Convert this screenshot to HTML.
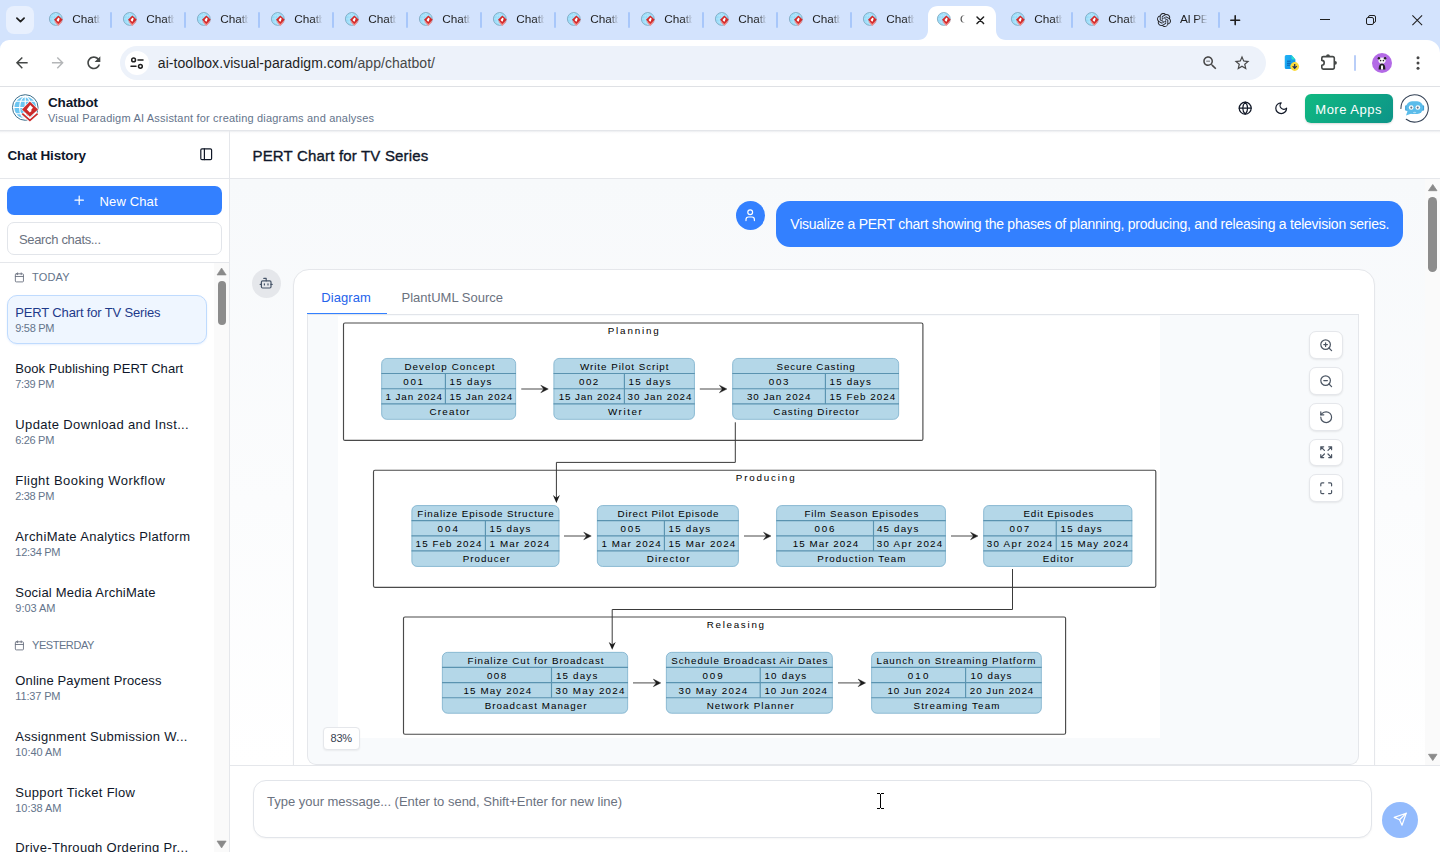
<!DOCTYPE html>
<html><head><meta charset="utf-8"><title>Chatbot</title>
<style>
html,body{margin:0;padding:0}
body{width:1440px;height:852px;overflow:hidden;position:relative;background:#fff;font-family:"Liberation Sans",sans-serif;}
.a{position:absolute;display:block}
.t{position:absolute;white-space:pre;display:block}
svg{overflow:visible}
</style></head><body>
<svg width="0" height="0" style="position:absolute"><defs><symbol id="vp" viewBox="0 0 40 40">
<circle cx="19.25" cy="19.5" r="12.8" fill="#fff" stroke="#3d6e8a" stroke-width="1"/>
<circle cx="19.25" cy="19.5" r="10.8" fill="#6cc5f1"/>
<g stroke="#fff" stroke-width="1.1" fill="none"><path d="M8 19.5h23M10 13.3h19M10 25.7h19M19.25 8v23"/><ellipse cx="19.25" cy="19.5" rx="5.6" ry="10.8"/></g>
<path d="M23.9 12.7 32.6 21.4 23.9 29.4 15.4 21.4Z" fill="#fff"/>
<path d="M23.9 13.4 32 21.4 23.9 28.7 16 21.4Z" fill="#cb2a2a"/>
<path d="M24.2 17 27 19.8 25.4 21.4v1.8l-1.6 1.4 -3-3.2Z" fill="#fff"/>
<path d="M16.3 25.3 23.9 32.4 31.6 25.3" fill="none" stroke="#fff" stroke-width="3.4"/>
<path d="M16.3 25.6 23.9 32.4 31.6 25.6" fill="none" stroke="#cb2a2a" stroke-width="1.7"/>
</symbol><symbol id="vps" viewBox="0 0 40 40">
<circle cx="19.25" cy="19.5" r="12.6" fill="#97dbf9" stroke="#7da6bd" stroke-width="1.6"/>
<g stroke="#fff" stroke-width="1" fill="none" opacity=".45"><path d="M8 19.5h23M10 13.3h19M10 25.7h19M19.25 8v23"/><ellipse cx="19.25" cy="19.5" rx="5.6" ry="10.8"/></g>
<path d="M16 24.5 24.2 33.5 32.5 24.5Z" fill="#f08a8a"/>
<path d="M24.2 12.6 33 21.2 24.2 29.4 15.6 21.2Z" fill="#d42a2a"/>
<path d="M24.4 16.6 27.4 19.6 25.6 21.3v2l-1.8 1.500 -3.200-3.400Z" fill="#fff"/>
</symbol><symbol id="oai" viewBox="0 0 24 24"><path fill="#202124" d="M22.2819 9.8211a5.9847 5.9847 0 0 0-.5157-4.9108 6.0462 6.0462 0 0 0-6.5098-2.9A6.0651 6.0651 0 0 0 4.9807 4.1818a5.9847 5.9847 0 0 0-3.9977 2.9 6.0462 6.0462 0 0 0 .7427 7.0966 5.98 5.98 0 0 0 .511 4.9107 6.051 6.051 0 0 0 6.5146 2.9001A5.9847 5.9847 0 0 0 13.2599 24a6.0557 6.0557 0 0 0 5.7718-4.2058 5.9894 5.9894 0 0 0 3.9977-2.9001 6.0557 6.0557 0 0 0-.7475-7.0729zm-9.022 12.6081a4.4755 4.4755 0 0 1-2.8764-1.0408l.1419-.0804 4.7783-2.7582a.7948.7948 0 0 0 .3927-.6813v-6.7369l2.02 1.1686a.071.071 0 0 1 .038.052v5.5826a4.504 4.504 0 0 1-4.4945 4.4944zm-9.6607-4.1254a4.4708 4.4708 0 0 1-.5346-3.0137l.142.0852 4.783 2.7582a.7712.7712 0 0 0 .7806 0l5.8428-3.3685v2.3324a.0804.0804 0 0 1-.0332.0615L9.74 19.9502a4.4992 4.4992 0 0 1-6.1408-1.6464zM2.3408 7.8956a4.485 4.485 0 0 1 2.3655-1.9728V11.6a.7664.7664 0 0 0 .3879.6765l5.8144 3.3543-2.0201 1.1685a.0757.0757 0 0 1-.071 0l-4.8303-2.7865A4.504 4.504 0 0 1 2.3408 7.872zm16.5963 3.8558L13.1038 8.364 15.1192 7.2a.0757.0757 0 0 1 .071 0l4.8303 2.7913a4.4944 4.4944 0 0 1-.6765 8.1042v-5.6772a.79.79 0 0 0-.407-.667zm2.0107-3.0231l-.142-.0852-4.7735-2.7818a.7759.7759 0 0 0-.7854 0L9.409 9.2297V6.8974a.0662.0662 0 0 1 .0284-.0615l4.8303-2.7866a4.4992 4.4992 0 0 1 6.6802 4.66zM8.3065 12.863l-2.02-1.1638a.0804.0804 0 0 1-.038-.0567V6.0742a4.4992 4.4992 0 0 1 7.3757-3.4537l-.142.0805L8.704 5.459a.7948.7948 0 0 0-.3927.6813zm1.0976-2.3654l2.602-1.4998 2.6069 1.4998v2.9994l-2.5974 1.4997-2.6067-1.4997Z"/></symbol></defs></svg>

<div class="a" style="left:0px;top:0px;width:1440px;height:56px;background:#d3e3fd"></div>
<div class="a" style="left:6px;top:6px;width:28px;height:28px;background:#e8f0fe;border-radius:8px"></div>
<svg class="a" style="left:15.5px;top:16.8px" width="9" height="6" viewBox="0 0 9 6" ><path d="M.9 1.100 4.500 4.700 8.100 1.100" fill="none" stroke="#1f1f1f" stroke-width="1.700" stroke-linecap="round" stroke-linejoin="round"/></svg>
<div class="a" style="left:0px;top:40px;width:1440px;height:46px;background:#fff;border-radius:9px 13px 0 0"></div>
<svg class="a" style="left:918px;top:6px" width="88" height="34" viewBox="0 0 88 34"><path d="M0 34 C6 34 10 30 10 24 V10 C10 4 14 0 20 0 H68 C74 0 78 4 78 10 V24 C78 30 82 34 88 34 Z" fill="#fff"/></svg>
<svg class="a" style="left:45.8px;top:9.2px" width="20.4" height="20.4" viewBox="0 0 40 40" ><use href="#vps"/></svg>
<span class="t" style="left:72.30px;top:14.01px;font-size:11.8px;line-height:11.8px;color:#1f1f1f;width:27.400px;overflow:hidden;letter-spacing:-0.1px;-webkit-mask-image:linear-gradient(90deg,#000 70%,rgba(0,0,0,.12) 97%);">Chatbot</span>
<div class="a" style="left:110px;top:12px;width:2px;height:16px;background:#a8c7fa;border-radius:1px"></div>
<svg class="a" style="left:119.8px;top:9.2px" width="20.4" height="20.4" viewBox="0 0 40 40" ><use href="#vps"/></svg>
<span class="t" style="left:146.30px;top:14.01px;font-size:11.8px;line-height:11.8px;color:#1f1f1f;width:27.400px;overflow:hidden;letter-spacing:-0.1px;-webkit-mask-image:linear-gradient(90deg,#000 70%,rgba(0,0,0,.12) 97%);">Chatbot</span>
<div class="a" style="left:184px;top:12px;width:2px;height:16px;background:#a8c7fa;border-radius:1px"></div>
<svg class="a" style="left:193.8px;top:9.2px" width="20.4" height="20.4" viewBox="0 0 40 40" ><use href="#vps"/></svg>
<span class="t" style="left:220.30px;top:14.01px;font-size:11.8px;line-height:11.8px;color:#1f1f1f;width:27.400px;overflow:hidden;letter-spacing:-0.1px;-webkit-mask-image:linear-gradient(90deg,#000 70%,rgba(0,0,0,.12) 97%);">Chatbot</span>
<div class="a" style="left:258px;top:12px;width:2px;height:16px;background:#a8c7fa;border-radius:1px"></div>
<svg class="a" style="left:267.8px;top:9.2px" width="20.4" height="20.4" viewBox="0 0 40 40" ><use href="#vps"/></svg>
<span class="t" style="left:294.30px;top:14.01px;font-size:11.8px;line-height:11.8px;color:#1f1f1f;width:27.400px;overflow:hidden;letter-spacing:-0.1px;-webkit-mask-image:linear-gradient(90deg,#000 70%,rgba(0,0,0,.12) 97%);">Chatbot</span>
<div class="a" style="left:332px;top:12px;width:2px;height:16px;background:#a8c7fa;border-radius:1px"></div>
<svg class="a" style="left:341.8px;top:9.2px" width="20.4" height="20.4" viewBox="0 0 40 40" ><use href="#vps"/></svg>
<span class="t" style="left:368.30px;top:14.01px;font-size:11.8px;line-height:11.8px;color:#1f1f1f;width:27.400px;overflow:hidden;letter-spacing:-0.1px;-webkit-mask-image:linear-gradient(90deg,#000 70%,rgba(0,0,0,.12) 97%);">Chatbot</span>
<div class="a" style="left:406px;top:12px;width:2px;height:16px;background:#a8c7fa;border-radius:1px"></div>
<svg class="a" style="left:415.8px;top:9.2px" width="20.4" height="20.4" viewBox="0 0 40 40" ><use href="#vps"/></svg>
<span class="t" style="left:442.30px;top:14.01px;font-size:11.8px;line-height:11.8px;color:#1f1f1f;width:27.400px;overflow:hidden;letter-spacing:-0.1px;-webkit-mask-image:linear-gradient(90deg,#000 70%,rgba(0,0,0,.12) 97%);">Chatbot</span>
<div class="a" style="left:480px;top:12px;width:2px;height:16px;background:#a8c7fa;border-radius:1px"></div>
<svg class="a" style="left:489.8px;top:9.2px" width="20.4" height="20.4" viewBox="0 0 40 40" ><use href="#vps"/></svg>
<span class="t" style="left:516.30px;top:14.01px;font-size:11.8px;line-height:11.8px;color:#1f1f1f;width:27.400px;overflow:hidden;letter-spacing:-0.1px;-webkit-mask-image:linear-gradient(90deg,#000 70%,rgba(0,0,0,.12) 97%);">Chatbot</span>
<div class="a" style="left:554px;top:12px;width:2px;height:16px;background:#a8c7fa;border-radius:1px"></div>
<svg class="a" style="left:563.8px;top:9.2px" width="20.4" height="20.4" viewBox="0 0 40 40" ><use href="#vps"/></svg>
<span class="t" style="left:590.30px;top:14.01px;font-size:11.8px;line-height:11.8px;color:#1f1f1f;width:27.400px;overflow:hidden;letter-spacing:-0.1px;-webkit-mask-image:linear-gradient(90deg,#000 70%,rgba(0,0,0,.12) 97%);">Chatbot</span>
<div class="a" style="left:628px;top:12px;width:2px;height:16px;background:#a8c7fa;border-radius:1px"></div>
<svg class="a" style="left:637.8px;top:9.2px" width="20.4" height="20.4" viewBox="0 0 40 40" ><use href="#vps"/></svg>
<span class="t" style="left:664.30px;top:14.01px;font-size:11.8px;line-height:11.8px;color:#1f1f1f;width:27.400px;overflow:hidden;letter-spacing:-0.1px;-webkit-mask-image:linear-gradient(90deg,#000 70%,rgba(0,0,0,.12) 97%);">Chatbot</span>
<div class="a" style="left:702px;top:12px;width:2px;height:16px;background:#a8c7fa;border-radius:1px"></div>
<svg class="a" style="left:711.8px;top:9.2px" width="20.4" height="20.4" viewBox="0 0 40 40" ><use href="#vps"/></svg>
<span class="t" style="left:738.30px;top:14.01px;font-size:11.8px;line-height:11.8px;color:#1f1f1f;width:27.400px;overflow:hidden;letter-spacing:-0.1px;-webkit-mask-image:linear-gradient(90deg,#000 70%,rgba(0,0,0,.12) 97%);">Chatbot</span>
<div class="a" style="left:776px;top:12px;width:2px;height:16px;background:#a8c7fa;border-radius:1px"></div>
<svg class="a" style="left:785.8px;top:9.2px" width="20.4" height="20.4" viewBox="0 0 40 40" ><use href="#vps"/></svg>
<span class="t" style="left:812.30px;top:14.01px;font-size:11.8px;line-height:11.8px;color:#1f1f1f;width:27.400px;overflow:hidden;letter-spacing:-0.1px;-webkit-mask-image:linear-gradient(90deg,#000 70%,rgba(0,0,0,.12) 97%);">Chatbot</span>
<div class="a" style="left:850px;top:12px;width:2px;height:16px;background:#a8c7fa;border-radius:1px"></div>
<svg class="a" style="left:859.8px;top:9.2px" width="20.4" height="20.4" viewBox="0 0 40 40" ><use href="#vps"/></svg>
<span class="t" style="left:886.30px;top:14.01px;font-size:11.8px;line-height:11.8px;color:#1f1f1f;width:27.400px;overflow:hidden;letter-spacing:-0.1px;-webkit-mask-image:linear-gradient(90deg,#000 70%,rgba(0,0,0,.12) 97%);">Chatbot</span>
<svg class="a" style="left:933.8px;top:9.2px" width="20.4" height="20.4" viewBox="0 0 40 40" ><use href="#vps"/></svg>
<span class="t" style="left:960.00px;top:14.01px;font-size:11.8px;line-height:11.8px;color:#1f1f1f;width:4.5px;overflow:hidden;-webkit-mask-image:linear-gradient(90deg,#000 10%,transparent 100%);">C</span>
<svg class="a" style="left:975.5px;top:15.8px" width="8.6" height="8.6" viewBox="0 0 8.600 8.600" ><path d="M1 1l6.600 6.600M7.600 1l-6.600 6.600" stroke="#1f1f1f" stroke-width="1.500" stroke-linecap="round"/></svg>
<svg class="a" style="left:1007.8px;top:9.2px" width="20.4" height="20.4" viewBox="0 0 40 40" ><use href="#vps"/></svg>
<span class="t" style="left:1034.30px;top:14.01px;font-size:11.8px;line-height:11.8px;color:#1f1f1f;width:27.400px;overflow:hidden;letter-spacing:-0.1px;-webkit-mask-image:linear-gradient(90deg,#000 70%,rgba(0,0,0,.12) 97%);">Chatbot</span>
<div class="a" style="left:1071px;top:12px;width:2px;height:16px;background:#a8c7fa;border-radius:1px"></div>
<svg class="a" style="left:1081.8px;top:9.2px" width="20.4" height="20.4" viewBox="0 0 40 40" ><use href="#vps"/></svg>
<span class="t" style="left:1108.30px;top:14.01px;font-size:11.8px;line-height:11.8px;color:#1f1f1f;width:27.400px;overflow:hidden;letter-spacing:-0.1px;-webkit-mask-image:linear-gradient(90deg,#000 70%,rgba(0,0,0,.12) 97%);">Chatbot</span>
<div class="a" style="left:1144px;top:12px;width:2px;height:16px;background:#a8c7fa;border-radius:1px"></div>
<svg class="a" style="left:1157px;top:13px" width="14" height="14" viewBox="0 0 24 24" ><use href="#oai"/></svg>
<span class="t" style="left:1180.00px;top:14.01px;font-size:11.8px;line-height:11.8px;color:#1f1f1f;width:27px;overflow:hidden;letter-spacing:-0.4px;-webkit-mask-image:linear-gradient(90deg,#000 60%,rgba(0,0,0,.1) 98%);">AI PERT</span>
<div class="a" style="left:1218px;top:12px;width:2px;height:16px;background:#a8c7fa;border-radius:1px"></div>
<svg class="a" style="left:1229.8px;top:14.8px" width="10.4" height="10.4" viewBox="0 0 10.400 10.400" ><path d="M5.200 .8v8.800M.8 5.200h8.800" stroke="#1f1f1f" stroke-width="1.600" stroke-linecap="round"/></svg>
<div class="a" style="left:1320px;top:19px;width:10px;height:1px;background:#1f1f1f"></div>
<svg class="a" style="left:1366px;top:15px" width="10" height="10" viewBox="0 0 10 10" ><rect x="0.5" y="2.5" width="7" height="7" rx="1.5" fill="none" stroke="#1f1f1f" stroke-width="1"/><path d="M2.5 2.5V2a1.5 1.5 0 0 1 1.5-1.5h4A1.5 1.5 0 0 1 9.5 2v4A1.5 1.5 0 0 1 8 7.5h-.5" fill="none" stroke="#1f1f1f" stroke-width="1"/></svg>
<svg class="a" style="left:1412px;top:15px" width="10.5" height="10.5" viewBox="0 0 10.5 10.5" ><path d="M.4 .4l9.7 9.7M10.1 .4L.4 10.1" stroke="#1f1f1f" stroke-width="1.05"/></svg>
<svg class="a" style="left:13.4px;top:54.2px" width="17.6" height="17.6" viewBox="0 0 24 24" ><path d="M20 11H7.83l5.59-5.59L12 4l-8 8 8 8 1.41-1.41L7.83 13H20v-2z" fill="#444746"/></svg>
<svg class="a" style="left:49px;top:54.2px" width="17.6" height="17.6" viewBox="0 0 24 24" ><path d="M12 4l-1.41 1.41L16.17 11H4v2h12.17l-5.58 5.59L12 20l8-8z" fill="#b4b6b8"/></svg>
<svg class="a" style="left:84.3px;top:53.2px" width="19.6" height="19.6" viewBox="0 0 24 24" ><path d="M17.65 6.35C16.2 4.9 14.21 4 12 4c-4.42 0-7.99 3.58-7.99 8s3.57 8 7.99 8c3.73 0 6.84-2.55 7.73-6h-2.08c-.82 2.33-3.04 4-5.65 4-3.31 0-6-2.69-6-6s2.69-6 6-6c1.66 0 3.14.69 4.22 1.78L13 11h7V4l-2.35 2.35z" fill="#444746"/></svg>
<div class="a" style="left:120px;top:46px;width:1146px;height:34px;background:#edf2fa;border-radius:17px"></div>
<div class="a" style="left:125px;top:51px;width:24px;height:24px;background:#fff;border-radius:12px"></div>
<svg class="a" style="left:130px;top:56px" width="14" height="14" viewBox="0 0 14 14" ><g fill="none" stroke="#1f1f1f" stroke-width="1.5" stroke-linecap="round"><circle cx="3.6" cy="3.9" r="1.9"/><path d="M8 3.9h5"/><circle cx="10.4" cy="10.3" r="1.9"/><path d="M1 10.3h5"/></g></svg>
<span class="t" style="left:157.80px;top:55.85px;font-size:14px;line-height:14px;color:#1f1f1f;letter-spacing:0.067px;">ai-toolbox.visual-paradigm.com</span>
<span class="t" style="left:353.60px;top:55.85px;font-size:14px;line-height:14px;color:#474747;letter-spacing:0.037px;">/app/chatbot/</span>
<svg class="a" style="left:1201px;top:54px" width="18" height="18" viewBox="0 0 24 24" ><path d="M15.5 14h-.79l-.28-.27C15.41 12.59 16 11.11 16 9.5 16 5.91 13.09 3 9.5 3S3 5.91 3 9.5 5.91 16 9.5 16c1.61 0 3.09-.59 4.23-1.57l.27.28v.79l5 4.99L20.49 19l-4.99-5zm-6 0C7.01 14 5 11.99 5 9.5S7.01 5 9.5 5 14 7.01 14 9.5 11.99 14 9.5 14zM7 9h5v1H7z" fill="#474747"/></svg>
<svg class="a" style="left:1233px;top:54px" width="18" height="18" viewBox="0 0 24 24" ><path d="M22 9.24l-7.19-.62L12 2 9.19 8.63 2 9.24l5.46 4.73L5.82 21 12 17.27 18.18 21l-1.63-7.03L22 9.24zM12 15.4l-3.76 2.27 1-4.28-3.32-2.88 4.38-.38L12 6.1l1.71 4.04 4.38.38-3.32 2.88 1 4.28L12 15.4z" fill="#474747"/></svg>
<svg class="a" style="left:1284px;top:54px" width="16" height="18" viewBox="0 0 16 18" ><defs><linearGradient id="dg" x1="0" y1="0" x2="1" y2="1"><stop offset="0" stop-color="#22b4f6"/><stop offset="1" stop-color="#0c8ee6"/></linearGradient></defs><path d="M.75 2.500A1.500 1.500 0 0 1 2.250 1H7.500l3.900 4.400V13.400a1.500 1.500 0 0 1-1.500 1.500H2.250a1.500 1.500 0 0 1-1.500-1.500Z" fill="url(#dg)"/><path d="M7.500 1l3.900 4.400H8.500a1 1 0 0 1-1-1Z" fill="#2fe0cb"/><path d="M3 7.200h3.600M3 9.300h3.600M3 11.200h3" stroke="#0a5fb0" stroke-width="1"/><circle cx="10.700" cy="12.500" r="4.400" fill="#fbdb3c"/><path d="M10.700 9.900v4M8.700 12.200l2 2.200 2-2.200" stroke="#1a2a5a" stroke-width="1.200" fill="none"/></svg>
<svg class="a" style="left:1320px;top:53px" width="18" height="18" viewBox="0 0 18 18" ><path d="M3.300 3.600H12.800a1.500 1.500 0 0 1 1.500 1.500V14.600a1.500 1.500 0 0 1-1.500 1.500H3.300a1.500 1.500 0 0 1-1.500-1.500V12.200a2.400 2.400 0 0 0 0-4.800V5.100a1.500 1.500 0 0 1 1.500-1.500Z" fill="none" stroke="#444746" stroke-width="1.600" stroke-linejoin="round"/><path d="M6.100 3.100a1.900 1.900 0 0 1 3.800 0ZM15 7.900a1.900 1.900 0 0 1 0 3.800Z" fill="#444746"/></svg>
<div class="a" style="left:1354px;top:55px;width:1.5px;height:16px;background:#b9cef8;border-radius:1px"></div>
<svg class="a" style="left:1372px;top:53px" width="20" height="20" viewBox="0 0 20 20" ><circle cx="10" cy="10" r="10" fill="#b36ae6"/><ellipse cx="10" cy="7.6" rx="3.6" ry="3.1" fill="#f4f4f4"/><circle cx="6.9" cy="5.2" r="1.2" fill="#222"/><circle cx="13.1" cy="5.2" r="1.2" fill="#222"/><circle cx="8.6" cy="7.6" r=".8" fill="#222"/><circle cx="11.4" cy="7.6" r=".8" fill="#222"/><path d="M6.6 16.5c0-4 1.2-6 3.4-6s3.400 2 3.400 6Z" fill="#222"/><rect x="9" y="12.500" width="2" height="4" fill="#f4f4f4"/></svg>
<svg class="a" style="left:1416px;top:56px" width="4" height="14" viewBox="0 0 4 14" ><circle cx="2" cy="1.8" r="1.5" fill="#474747"/><circle cx="2" cy="7" r="1.5" fill="#474747"/><circle cx="2" cy="12.2" r="1.5" fill="#474747"/></svg>
<div class="a" style="left:0px;top:86px;width:1440px;height:1px;background:#dfe1e5"></div>
<div class="a" style="left:0px;top:87px;width:1440px;height:43px;background:#fff"></div>
<div class="a" style="left:0px;top:129.7px;width:1440px;height:1.3px;background:#e4e6ea"></div>
<svg class="a" style="left:6px;top:88px" width="40" height="40" viewBox="0 0 40 40" ><use href="#vp"/></svg>
<span class="t" style="left:48.00px;top:95.97px;font-size:13.5px;line-height:13.5px;color:#0f172a;letter-spacing:-0.165px;font-weight:bold;">Chatbot</span>
<span class="t" style="left:48.00px;top:112.89px;font-size:11px;line-height:11px;color:#64748b;letter-spacing:0.192px;">Visual Paradigm AI Assistant for creating diagrams and analyses</span>
<svg class="a" style="left:1237.9px;top:100.8px" width="14.4" height="14.4" viewBox="0 0 24 24" fill="none" stroke="#111827" stroke-width="2" stroke-linecap="round" stroke-linejoin="round"><circle cx="12" cy="12" r="10"/><path d="M12 2a14.500 14.500 0 0 0 0 20 14.500 14.500 0 0 0 0-20"/><path d="M2 12h20"/></svg>
<svg class="a" style="left:1273.8px;top:100.8px" width="14.4" height="14.4" viewBox="0 0 24 24" fill="none" stroke="#111827" stroke-width="2" stroke-linecap="round" stroke-linejoin="round"><path d="M12 3a6 6 0 0 0 9 9 9 9 0 1 1-9-9Z"/></svg>
<div class="a" style="left:1305px;top:94px;width:88px;height:29px;background:linear-gradient(135deg,#10b981,#0d9488);border-radius:6px;box-shadow:0 1px 2px rgba(0,0,0,.15)"></div>
<span class="t" style="left:1315.30px;top:102.80px;font-size:13px;line-height:13px;color:#fff;letter-spacing:0.507px;">More Apps</span>
<svg class="a" style="left:1400px;top:94px" width="29" height="29" viewBox="0 0 29 29" ><path d="M.9 14.400A13.700 13.700 0 1 1 6.240 25.250" fill="none" stroke="#334155" stroke-width="1.050" stroke-linecap="round"/><rect x="5.100" y="11.300" width="2.400" height="5.400" rx="1.200" fill="#3f9fd6"/><rect x="21.700" y="11.300" width="2.400" height="5.400" rx="1.200" fill="#3f9fd6"/><path d="M7.400 17.500 6 21.400 11.500 19.600Z" fill="#5bbcea"/><rect x="6.200" y="7.200" width="16.800" height="12.800" rx="5.800" fill="#5bbcea"/><circle cx="11.200" cy="13.500" r="2.350" fill="#fff"/><circle cx="17.800" cy="13.500" r="2.350" fill="#fff"/><circle cx="11.300" cy="13.600" r="1.050" fill="#5f7082"/><circle cx="17.700" cy="13.600" r="1.050" fill="#5f7082"/><ellipse cx="14.600" cy="18.500" rx="1.700" ry=".7" fill="#a9def6"/></svg>
<div class="a" style="left:0px;top:131px;width:229px;height:721px;background:#fff"></div>
<div class="a" style="left:229px;top:131px;width:1px;height:721px;background:#e5e7eb"></div>
<span class="t" style="left:7.50px;top:149.07px;font-size:13.5px;line-height:13.5px;color:#0f172a;letter-spacing:-0.160px;font-weight:bold;">Chat History</span>
<svg class="a" style="left:198.9px;top:146.8px" width="14.4" height="14.4" viewBox="0 0 24 24" fill="none" stroke="#111827" stroke-width="2" stroke-linecap="round" stroke-linejoin="round"><rect width="18" height="18" x="3" y="3" rx="2"/><path d="M9 3v18"/></svg>
<div class="a" style="left:0px;top:178px;width:229px;height:1px;background:#e5e7eb"></div>
<div class="a" style="left:7px;top:186px;width:215px;height:29px;background:#3380ff;border-radius:7px"></div>
<svg class="a" style="left:72.2px;top:193.3px" width="14.4" height="14.4" viewBox="0 0 24 24" fill="none" stroke="#fff" stroke-width="2" stroke-linecap="round" stroke-linejoin="round"><path d="M5 12h14"/><path d="M12 5v14"/></svg>
<span class="t" style="left:99.50px;top:195.00px;font-size:13px;line-height:13px;color:#fff;letter-spacing:0.132px;">New Chat</span>
<div class="a" style="left:7px;top:222px;width:215px;height:32.5px;background:#fff;border:1px solid #e2e5ea;border-radius:7px;box-sizing:border-box"></div>
<span class="t" style="left:19.00px;top:233.00px;font-size:13px;line-height:13px;color:#6b7280;letter-spacing:-0.336px;">Search chats...</span>
<div class="a" style="left:0px;top:262px;width:229px;height:1px;background:#e5e7eb"></div>
<div class="a" style="left:214px;top:263px;width:15px;height:589px;background:#fafafa"></div>
<svg class="a" style="left:217.2px;top:268px" width="9.2" height="7" viewBox="0 0 9.200 7" ><path d="M0 7 4.600 0 9.200 7Z" fill="#8a8a8a" stroke="#8a8a8a" stroke-width=".6" stroke-linejoin="round"/></svg>
<div class="a" style="left:217.5px;top:281px;width:8.5px;height:44px;background:#8c8c8c;border-radius:4.500px"></div>
<svg class="a" style="left:217.2px;top:840.5px" width="9.2" height="7" viewBox="0 0 9.200 7" ><path d="M0 0 4.600 7 9.200 0Z" fill="#8a8a8a" stroke="#8a8a8a" stroke-width=".6" stroke-linejoin="round"/></svg>
<svg class="a" style="left:14.1px;top:271.9px" width="10.8" height="10.8" viewBox="0 0 24 24" fill="none" stroke="#6b7280" stroke-width="2" stroke-linecap="round" stroke-linejoin="round"><path d="M8 2v4"/><path d="M16 2v4"/><rect width="18" height="18" x="3" y="4" rx="2"/><path d="M3 10h18"/></svg>
<span class="t" style="left:32.00px;top:271.69px;font-size:11px;line-height:11px;color:#64748b;letter-spacing:0.155px;">TODAY</span>
<div class="a" style="left:7px;top:295px;width:200px;height:49px;background:#eff6ff;border:1px solid #bfdbfe;border-radius:10px;box-sizing:border-box;box-shadow:0 1px 2px rgba(59,130,246,.12)"></div>
<span class="t" style="left:15.30px;top:306.00px;font-size:13px;line-height:13px;color:#1e3a8a;letter-spacing:-0.154px;">PERT Chart for TV Series</span>
<span class="t" style="left:15.30px;top:323.09px;font-size:11px;line-height:11px;color:#64748b;letter-spacing:-0.311px;">9:58 PM</span>
<span class="t" style="left:15.30px;top:361.80px;font-size:13px;line-height:13px;color:#0f172a;letter-spacing:0.058px;">Book Publishing PERT Chart</span>
<span class="t" style="left:15.30px;top:378.69px;font-size:11px;line-height:11px;color:#64748b;letter-spacing:-0.328px;">7:39 PM</span>
<span class="t" style="left:15.30px;top:417.80px;font-size:13px;line-height:13px;color:#0f172a;letter-spacing:0.360px;">Update Download and Inst...</span>
<span class="t" style="left:15.30px;top:434.69px;font-size:11px;line-height:11px;color:#64748b;letter-spacing:-0.328px;">6:26 PM</span>
<span class="t" style="left:15.30px;top:473.80px;font-size:13px;line-height:13px;color:#0f172a;letter-spacing:0.468px;">Flight Booking Workflow</span>
<span class="t" style="left:15.30px;top:490.69px;font-size:11px;line-height:11px;color:#64748b;letter-spacing:-0.328px;">2:38 PM</span>
<span class="t" style="left:15.30px;top:530.00px;font-size:13px;line-height:13px;color:#0f172a;letter-spacing:0.343px;">ArchiMate Analytics Platform</span>
<span class="t" style="left:15.30px;top:547.29px;font-size:11px;line-height:11px;color:#64748b;letter-spacing:-0.269px;">12:34 PM</span>
<span class="t" style="left:15.30px;top:586.00px;font-size:13px;line-height:13px;color:#0f172a;letter-spacing:0.207px;">Social Media ArchiMate</span>
<span class="t" style="left:15.30px;top:603.09px;font-size:11px;line-height:11px;color:#64748b;letter-spacing:-0.027px;">9:03 AM</span>
<span class="t" style="left:15.30px;top:673.80px;font-size:13px;line-height:13px;color:#0f172a;letter-spacing:0.149px;">Online Payment Process</span>
<span class="t" style="left:15.30px;top:691.09px;font-size:11px;line-height:11px;color:#64748b;letter-spacing:-0.153px;">11:37 PM</span>
<span class="t" style="left:15.30px;top:729.80px;font-size:13px;line-height:13px;color:#0f172a;letter-spacing:0.295px;">Assignment Submission W...</span>
<span class="t" style="left:15.30px;top:747.09px;font-size:11px;line-height:11px;color:#64748b;letter-spacing:-0.040px;">10:40 AM</span>
<span class="t" style="left:15.30px;top:785.80px;font-size:13px;line-height:13px;color:#0f172a;letter-spacing:0.308px;">Support Ticket Flow</span>
<span class="t" style="left:15.30px;top:802.89px;font-size:11px;line-height:11px;color:#64748b;letter-spacing:-0.040px;">10:38 AM</span>
<span class="t" style="left:15.30px;top:841.00px;font-size:13px;line-height:13px;color:#0f172a;letter-spacing:0.322px;">Drive-Through Ordering Pr...</span>
<svg class="a" style="left:14.1px;top:640.4px" width="10.8" height="10.8" viewBox="0 0 24 24" fill="none" stroke="#6b7280" stroke-width="2" stroke-linecap="round" stroke-linejoin="round"><path d="M8 2v4"/><path d="M16 2v4"/><rect width="18" height="18" x="3" y="4" rx="2"/><path d="M3 10h18"/></svg>
<span class="t" style="left:32.00px;top:640.19px;font-size:11px;line-height:11px;color:#64748b;letter-spacing:-0.439px;">YESTERDAY</span>
<div class="a" style="left:230px;top:131px;width:1210px;height:47px;background:#fff"></div>
<span class="t" style="left:252.50px;top:147.80px;font-size:15px;line-height:15px;color:#0f172a;letter-spacing:0.177px;-webkit-text-stroke:0.35px #0f172a;">PERT Chart for TV Series</span>
<div class="a" style="left:230px;top:178px;width:1210px;height:1px;background:#e5e7eb"></div>
<div class="a" style="left:230px;top:179px;width:1210px;height:586px;background:linear-gradient(180deg,#f7f9fb 0%,#fbfcfd 55%,#ffffff 100%)"></div>
<div class="a" style="left:1425px;top:179px;width:15px;height:586px;background:#fafafa"></div>
<svg class="a" style="left:1427.5px;top:184px" width="9.5" height="7" viewBox="0 0 9.500 7" ><path d="M.5 6.700 4.750 .5 9 6.700Z" fill="#8a8a8a" stroke="#8a8a8a" stroke-width=".8" stroke-linejoin="round"/></svg>
<div class="a" style="left:1428px;top:197px;width:9px;height:75px;background:#8c8c8c;border-radius:4.500px"></div>
<svg class="a" style="left:1427.5px;top:754px" width="9.5" height="7" viewBox="0 0 9.500 7" ><path d="M.5 .3 4.750 6.500 9 .3Z" fill="#8a8a8a" stroke="#8a8a8a" stroke-width=".8" stroke-linejoin="round"/></svg>
<div class="a" style="left:736px;top:200.5px;width:29px;height:29px;background:#3380ff;border-radius:50%"></div>
<svg class="a" style="left:743.3px;top:207.7px" width="14.4" height="14.4" viewBox="0 0 24 24" fill="none" stroke="#fff" stroke-width="2" stroke-linecap="round" stroke-linejoin="round"><path d="M19 21v-2a4 4 0 0 0-4-4H9a4 4 0 0 0-4 4v2"/><circle cx="12" cy="7" r="4"/></svg>
<div class="a" style="left:776px;top:200.7px;width:627.3px;height:46.1px;background:#3380ff;border-radius:14px"></div>
<span class="t" style="left:790.30px;top:217.15px;font-size:14px;line-height:14px;color:#fff;letter-spacing:-0.246px;">Visualize a PERT chart showing the phases of planning, producing, and releasing a television series.</span>
<div class="a" style="left:252px;top:269px;width:29px;height:29px;background:#e5e7eb;border-radius:50%"></div>
<svg class="a" style="left:258.9px;top:276.1px" width="14.4" height="14.4" viewBox="0 0 24 24" fill="none" stroke="#475569" stroke-width="2" stroke-linecap="round" stroke-linejoin="round"><path d="M12 8V4H8"/><rect width="16" height="12" x="4" y="8" rx="2"/><path d="M2 14h2"/><path d="M20 14h2"/><path d="M15 13v2"/><path d="M9 13v2"/></svg>
<div class="a" style="left:230px;top:179px;width:1195px;height:586px;overflow:hidden">
<div class="a" style="left:62.5px;top:90px;width:1082.5px;height:520px;background:#fff;border:1px solid #e5e7eb;border-radius:16px;box-sizing:border-box;box-shadow:0 1px 2px rgba(0,0,0,.04)"></div>
</div>
<span class="t" style="left:321.30px;top:291.30px;font-size:13px;line-height:13px;color:#2563eb;letter-spacing:0.062px;">Diagram</span>
<span class="t" style="left:401.50px;top:291.30px;font-size:13px;line-height:13px;color:#6b7280;letter-spacing:0.007px;">PlantUML Source</span>
<div class="a" style="left:307px;top:314.2px;width:1052px;height:1.4px;background:#e2e5ea"></div>
<div class="a" style="left:307px;top:312.8px;width:80px;height:1.4px;background:#3380ff"></div>
<div class="a" style="left:307px;top:315px;width:1052px;height:450px;background:#f8fafc;border:1px solid #e5e7eb;border-top:none;border-radius:0 0 9px 9px;box-sizing:border-box"></div>
<div class="a" style="left:338px;top:316px;width:822px;height:422px;background:#fff"></div>
<div class="a" style="left:1309.2px;top:331.2px;width:34.3px;height:27.8px;background:#fff;border:1px solid #e5e7eb;border-radius:7px;box-sizing:border-box;box-shadow:0 1px 2px rgba(0,0,0,.08)"></div>
<svg class="a" style="left:1319.1px;top:338.0px" width="14.4" height="14.4" viewBox="0 0 24 24" fill="none" stroke="#4b5563" stroke-width="2" stroke-linecap="round" stroke-linejoin="round"><circle cx="11" cy="11" r="8"/><line x1="21" x2="16.650" y1="21" y2="16.650"/><line x1="8" x2="14" y1="11" y2="11"/><line x1="11" x2="11" y1="8" y2="14"/></svg>
<div class="a" style="left:1309.2px;top:367.0px;width:34.3px;height:27.8px;background:#fff;border:1px solid #e5e7eb;border-radius:7px;box-sizing:border-box;box-shadow:0 1px 2px rgba(0,0,0,.08)"></div>
<svg class="a" style="left:1319.1px;top:373.8px" width="14.4" height="14.4" viewBox="0 0 24 24" fill="none" stroke="#4b5563" stroke-width="2" stroke-linecap="round" stroke-linejoin="round"><circle cx="11" cy="11" r="8"/><line x1="21" x2="16.650" y1="21" y2="16.650"/><line x1="8" x2="14" y1="11" y2="11"/></svg>
<div class="a" style="left:1309.2px;top:402.8px;width:34.3px;height:27.8px;background:#fff;border:1px solid #e5e7eb;border-radius:7px;box-sizing:border-box;box-shadow:0 1px 2px rgba(0,0,0,.08)"></div>
<svg class="a" style="left:1319.1px;top:409.6px" width="14.4" height="14.4" viewBox="0 0 24 24" fill="none" stroke="#4b5563" stroke-width="2" stroke-linecap="round" stroke-linejoin="round"><path d="M3 12a9 9 0 1 0 9-9 9.750 9.750 0 0 0-6.740 2.740L3 8"/><path d="M3 3v5h5"/></svg>
<div class="a" style="left:1309.2px;top:438.6px;width:34.3px;height:27.8px;background:#fff;border:1px solid #e5e7eb;border-radius:7px;box-sizing:border-box;box-shadow:0 1px 2px rgba(0,0,0,.08)"></div>
<svg class="a" style="left:1319.1px;top:445.4px" width="14.4" height="14.4" viewBox="0 0 24 24" fill="none" stroke="#4b5563" stroke-width="2" stroke-linecap="round" stroke-linejoin="round"><path d="m21 21-6-6m6 6v-4.800m0 4.800h-4.800"/><path d="M3 16.200V21m0 0h4.800M3 21l6-6"/><path d="M21 7.800V3m0 0h-4.800M21 3l-6 6"/><path d="M3 7.800V3m0 0h4.800M3 3l6 6"/></svg>
<div class="a" style="left:1309.2px;top:474.4px;width:34.3px;height:27.8px;background:#fff;border:1px solid #e5e7eb;border-radius:7px;box-sizing:border-box;box-shadow:0 1px 2px rgba(0,0,0,.08)"></div>
<svg class="a" style="left:1319.1px;top:481.2px" width="14.4" height="14.4" viewBox="0 0 24 24" fill="none" stroke="#4b5563" stroke-width="2" stroke-linecap="round" stroke-linejoin="round"><path d="M8 3H5a2 2 0 0 0-2 2v3"/><path d="M21 8V5a2 2 0 0 0-2-2h-3"/><path d="M3 16v3a2 2 0 0 0 2 2h3"/><path d="M16 21h3a2 2 0 0 0 2-2v-3"/></svg>
<div class="a" style="left:322.5px;top:726.5px;width:37px;height:23px;background:#fff;border:1px solid #e5e7eb;border-radius:4px;box-sizing:border-box;box-shadow:0 1px 2px rgba(0,0,0,.06)"></div>
<span class="t" style="left:330.60px;top:732.69px;font-size:11px;line-height:11px;color:#374151;letter-spacing:-0.308px;">83%</span>
<div class="a" style="left:230px;top:765px;width:1210px;height:1px;background:#e5e7eb"></div>
<div class="a" style="left:230px;top:766px;width:1210px;height:86px;background:#fff"></div>
<div class="a" style="left:252.5px;top:780px;width:1119.5px;height:57.5px;background:#fff;border:1px solid #e2e5ea;border-radius:13px;box-sizing:border-box;box-shadow:0 1px 2px rgba(0,0,0,.04)"></div>
<span class="t" style="left:267.00px;top:795.00px;font-size:13px;line-height:13px;color:#6b7280;letter-spacing:-0.014px;">Type your message... (Enter to send, Shift+Enter for new line)</span>
<div class="a" style="left:1382px;top:802px;width:36px;height:36px;background:#93bbfd;border-radius:50%"></div>
<svg class="a" style="left:1393.0px;top:812.2px" width="14.4" height="14.4" viewBox="0 0 24 24" fill="none" stroke="#fff" stroke-width="2" stroke-linecap="round" stroke-linejoin="round"><path d="m22 2-7 20-4-9-9-4Z"/><path d="M22 2 11 13"/></svg>
<svg class="a" style="left:877px;top:793px" width="7" height="16" viewBox="0 0 7 16" shape-rendering="crispEdges"><path d="M0 .5h3M4 .5h3M0 15.5h3M4 15.5h3M3.500 1v14" fill="none" stroke="#000" stroke-width="1"/></svg>
<svg class="a" style="left:0;top:0" width="1440" height="852" viewBox="0 0 1440 852" font-family="Liberation Sans, sans-serif" fill="#000">
<rect x="343.5" y="323" width="579.40" height="117.40" rx="1.5" fill="none" stroke="#4a4a4a" stroke-width="1.15"/>
<text x="607.70" y="333.75" textLength="51.05" lengthAdjust="spacing" font-size="9.8">Planning</text>
<rect x="373.5" y="470.2" width="782.30" height="117.10" rx="1.5" fill="none" stroke="#4a4a4a" stroke-width="1.15"/>
<text x="735.80" y="480.60" textLength="58.80" lengthAdjust="spacing" font-size="9.8">Producing</text>
<rect x="403.5" y="617" width="662.10" height="117.20" rx="1.5" fill="none" stroke="#4a4a4a" stroke-width="1.15"/>
<text x="706.70" y="628.00" textLength="57.30" lengthAdjust="spacing" font-size="9.8">Releasing</text>
<rect x="381.65000000000003" y="358.45000000000005" width="134.00" height="60.9" rx="5.2" fill="#b4d7e8" stroke="#6da6c6" stroke-width="0.7"/>
<path d="M381.3 373.5H516M381.3 388.70000000000005H516M381.3 403.8H516M445.4 373.5V403.8" stroke="#5a93b0" stroke-width="1.15" fill="none"/>
<text x="404.40" y="369.80" textLength="90.20" lengthAdjust="spacing" font-size="9.8">Develop Concept</text>
<text x="403.30" y="384.60" textLength="19.70" lengthAdjust="spacing" font-size="9.8">001</text>
<text x="449.40" y="384.60" textLength="42.10" lengthAdjust="spacing" font-size="9.8">15 days</text>
<text x="385.60" y="399.70" textLength="56.40" lengthAdjust="spacing" font-size="9.8">1 Jan 2024</text>
<text x="449.40" y="399.70" textLength="62.90" lengthAdjust="spacing" font-size="9.8">15 Jan 2024</text>
<text x="429.40" y="414.80" textLength="40.20" lengthAdjust="spacing" font-size="9.8">Creator</text>
<rect x="553.85" y="358.45000000000005" width="140.60" height="60.9" rx="5.2" fill="#b4d7e8" stroke="#6da6c6" stroke-width="0.7"/>
<path d="M553.5 373.5H694.8M553.5 388.70000000000005H694.8M553.5 403.8H694.8M624.4 373.5V403.8" stroke="#5a93b0" stroke-width="1.15" fill="none"/>
<text x="580.00" y="369.80" textLength="88.50" lengthAdjust="spacing" font-size="9.8">Write Pilot Script</text>
<text x="579.00" y="384.60" textLength="19.30" lengthAdjust="spacing" font-size="9.8">002</text>
<text x="628.50" y="384.60" textLength="42.10" lengthAdjust="spacing" font-size="9.8">15 days</text>
<text x="558.75" y="399.70" textLength="62.50" lengthAdjust="spacing" font-size="9.8">15 Jan 2024</text>
<text x="627.50" y="399.70" textLength="64.00" lengthAdjust="spacing" font-size="9.8">30 Jan 2024</text>
<text x="608.00" y="414.80" textLength="33.70" lengthAdjust="spacing" font-size="9.8">Writer</text>
<rect x="732.65" y="358.45000000000005" width="166.00" height="60.9" rx="5.2" fill="#b4d7e8" stroke="#6da6c6" stroke-width="0.7"/>
<path d="M732.3 373.5H899M732.3 388.70000000000005H899M732.3 403.8H899M825.4 373.5V403.8" stroke="#5a93b0" stroke-width="1.15" fill="none"/>
<text x="776.50" y="369.80" textLength="78.30" lengthAdjust="spacing" font-size="9.8">Secure Casting</text>
<text x="768.75" y="384.60" textLength="19.75" lengthAdjust="spacing" font-size="9.8">003</text>
<text x="829.60" y="384.60" textLength="41.20" lengthAdjust="spacing" font-size="9.8">15 days</text>
<text x="746.90" y="399.70" textLength="63.50" lengthAdjust="spacing" font-size="9.8">30 Jan 2024</text>
<text x="829.60" y="399.70" textLength="65.60" lengthAdjust="spacing" font-size="9.8">15 Feb 2024</text>
<text x="773.30" y="414.80" textLength="85.45" lengthAdjust="spacing" font-size="9.8">Casting Director</text>
<rect x="411.85" y="505.55" width="147.20" height="60.9" rx="5.2" fill="#b4d7e8" stroke="#6da6c6" stroke-width="0.7"/>
<path d="M411.5 520.6H559.4M411.5 535.8H559.4M411.5 550.9H559.4M485.4 520.6V550.9" stroke="#5a93b0" stroke-width="1.15" fill="none"/>
<text x="417.30" y="516.90" textLength="136.45" lengthAdjust="spacing" font-size="9.8">Finalize Episode Structure</text>
<text x="437.50" y="531.70" textLength="20.50" lengthAdjust="spacing" font-size="9.8">004</text>
<text x="489.60" y="531.70" textLength="40.80" lengthAdjust="spacing" font-size="9.8">15 days</text>
<text x="415.60" y="546.80" textLength="65.90" lengthAdjust="spacing" font-size="9.8">15 Feb 2024</text>
<text x="489.60" y="546.80" textLength="59.60" lengthAdjust="spacing" font-size="9.8">1 Mar 2024</text>
<text x="462.70" y="561.90" textLength="46.70" lengthAdjust="spacing" font-size="9.8">Producer</text>
<rect x="597.35" y="505.55" width="141.05" height="60.9" rx="5.2" fill="#b4d7e8" stroke="#6da6c6" stroke-width="0.7"/>
<path d="M597 520.6H738.75M597 535.8H738.75M597 550.9H738.75M664.4 520.6V550.9" stroke="#5a93b0" stroke-width="1.15" fill="none"/>
<text x="617.50" y="516.90" textLength="101.00" lengthAdjust="spacing" font-size="9.8">Direct Pilot Episode</text>
<text x="620.60" y="531.70" textLength="19.80" lengthAdjust="spacing" font-size="9.8">005</text>
<text x="668.50" y="531.70" textLength="41.70" lengthAdjust="spacing" font-size="9.8">15 days</text>
<text x="601.50" y="546.80" textLength="59.30" lengthAdjust="spacing" font-size="9.8">1 Mar 2024</text>
<text x="668.50" y="546.80" textLength="66.70" lengthAdjust="spacing" font-size="9.8">15 Mar 2024</text>
<text x="646.70" y="561.90" textLength="42.70" lengthAdjust="spacing" font-size="9.8">Director</text>
<rect x="776.6" y="505.55" width="168.85" height="60.9" rx="5.2" fill="#b4d7e8" stroke="#6da6c6" stroke-width="0.7"/>
<path d="M776.25 520.6H945.8M776.25 535.8H945.8M776.25 550.9H945.8M873.5 520.6V550.9" stroke="#5a93b0" stroke-width="1.15" fill="none"/>
<text x="804.40" y="516.90" textLength="113.90" lengthAdjust="spacing" font-size="9.8">Film Season Episodes</text>
<text x="814.60" y="531.70" textLength="19.80" lengthAdjust="spacing" font-size="9.8">006</text>
<text x="877.00" y="531.70" textLength="41.30" lengthAdjust="spacing" font-size="9.8">45 days</text>
<text x="792.70" y="546.80" textLength="65.60" lengthAdjust="spacing" font-size="9.8">15 Mar 2024</text>
<text x="876.70" y="546.80" textLength="65.60" lengthAdjust="spacing" font-size="9.8">30 Apr 2024</text>
<text x="817.30" y="561.90" textLength="88.10" lengthAdjust="spacing" font-size="9.8">Production Team</text>
<rect x="983.65" y="505.55" width="148.30" height="60.9" rx="5.2" fill="#b4d7e8" stroke="#6da6c6" stroke-width="0.7"/>
<path d="M983.3 520.6H1132.3M983.3 535.8H1132.3M983.3 550.9H1132.3M1056.25 520.6V550.9" stroke="#5a93b0" stroke-width="1.15" fill="none"/>
<text x="1023.50" y="516.90" textLength="69.80" lengthAdjust="spacing" font-size="9.8">Edit Episodes</text>
<text x="1009.60" y="531.70" textLength="19.60" lengthAdjust="spacing" font-size="9.8">007</text>
<text x="1060.60" y="531.70" textLength="41.10" lengthAdjust="spacing" font-size="9.8">15 days</text>
<text x="986.70" y="546.80" textLength="65.60" lengthAdjust="spacing" font-size="9.8">30 Apr 2024</text>
<text x="1060.60" y="546.80" textLength="67.70" lengthAdjust="spacing" font-size="9.8">15 May 2024</text>
<text x="1042.70" y="561.90" textLength="30.80" lengthAdjust="spacing" font-size="9.8">Editor</text>
<rect x="442.35" y="652.35" width="185.30" height="60.9" rx="5.2" fill="#b4d7e8" stroke="#6da6c6" stroke-width="0.7"/>
<path d="M442 667.4H628M442 682.6H628M442 697.7H628M551.5 667.4V697.7" stroke="#5a93b0" stroke-width="1.15" fill="none"/>
<text x="467.50" y="663.70" textLength="136.00" lengthAdjust="spacing" font-size="9.8">Finalize Cut for Broadcast</text>
<text x="486.90" y="678.50" textLength="19.35" lengthAdjust="spacing" font-size="9.8">008</text>
<text x="556.00" y="678.50" textLength="41.30" lengthAdjust="spacing" font-size="9.8">15 days</text>
<text x="463.50" y="693.60" textLength="67.75" lengthAdjust="spacing" font-size="9.8">15 May 2024</text>
<text x="555.60" y="693.60" textLength="68.80" lengthAdjust="spacing" font-size="9.8">30 May 2024</text>
<text x="484.80" y="708.70" textLength="101.70" lengthAdjust="spacing" font-size="9.8">Broadcast Manager</text>
<rect x="666.35" y="652.35" width="166.00" height="60.9" rx="5.2" fill="#b4d7e8" stroke="#6da6c6" stroke-width="0.7"/>
<path d="M666 667.4H832.7M666 682.6H832.7M666 697.7H832.7M760.2 667.4V697.7" stroke="#5a93b0" stroke-width="1.15" fill="none"/>
<text x="671.25" y="663.70" textLength="156.25" lengthAdjust="spacing" font-size="9.8">Schedule Broadcast Air Dates</text>
<text x="702.50" y="678.50" textLength="20.20" lengthAdjust="spacing" font-size="9.8">009</text>
<text x="764.40" y="678.50" textLength="41.85" lengthAdjust="spacing" font-size="9.8">10 days</text>
<text x="678.50" y="693.60" textLength="68.80" lengthAdjust="spacing" font-size="9.8">30 May 2024</text>
<text x="764.40" y="693.60" textLength="62.60" lengthAdjust="spacing" font-size="9.8">10 Jun 2024</text>
<text x="706.70" y="708.70" textLength="87.05" lengthAdjust="spacing" font-size="9.8">Network Planner</text>
<rect x="871.6" y="652.35" width="169.75" height="60.9" rx="5.2" fill="#b4d7e8" stroke="#6da6c6" stroke-width="0.7"/>
<path d="M871.25 667.4H1041.7M871.25 682.6H1041.7M871.25 697.7H1041.7M965.6 667.4V697.7" stroke="#5a93b0" stroke-width="1.15" fill="none"/>
<text x="876.50" y="663.70" textLength="158.90" lengthAdjust="spacing" font-size="9.8">Launch on Streaming Platform</text>
<text x="907.70" y="678.50" textLength="20.80" lengthAdjust="spacing" font-size="9.8">010</text>
<text x="970.40" y="678.50" textLength="41.10" lengthAdjust="spacing" font-size="9.8">10 days</text>
<text x="887.50" y="693.60" textLength="62.50" lengthAdjust="spacing" font-size="9.8">10 Jun 2024</text>
<text x="969.80" y="693.60" textLength="63.50" lengthAdjust="spacing" font-size="9.8">20 Jun 2024</text>
<text x="913.50" y="708.70" textLength="85.90" lengthAdjust="spacing" font-size="9.8">Streaming Team</text>
<path d="M521.25 389H544.3" stroke="#5a5a5a" stroke-width="1.1" fill="none"/><path d="M548.3 389L540.8 385.2L543.6999999999999 389L540.8 392.8Z" fill="#1c1c1c" stroke="#1c1c1c" stroke-width=".4" stroke-linejoin="round"/>
<path d="M699.8 389H722.9" stroke="#5a5a5a" stroke-width="1.1" fill="none"/><path d="M726.9 389L719.4 385.2L722.3 389L719.4 392.8Z" fill="#1c1c1c" stroke="#1c1c1c" stroke-width=".4" stroke-linejoin="round"/>
<path d="M564 536H587.25" stroke="#5a5a5a" stroke-width="1.1" fill="none"/><path d="M591.25 536L583.75 532.2L586.65 536L583.75 539.8Z" fill="#1c1c1c" stroke="#1c1c1c" stroke-width=".4" stroke-linejoin="round"/>
<path d="M744 536H767" stroke="#5a5a5a" stroke-width="1.1" fill="none"/><path d="M771 536L763.5 532.2L766.4 536L763.5 539.8Z" fill="#1c1c1c" stroke="#1c1c1c" stroke-width=".4" stroke-linejoin="round"/>
<path d="M951 536H974" stroke="#5a5a5a" stroke-width="1.1" fill="none"/><path d="M978 536L970.5 532.2L973.4 536L970.5 539.8Z" fill="#1c1c1c" stroke="#1c1c1c" stroke-width=".4" stroke-linejoin="round"/>
<path d="M633 682.9H656.8" stroke="#5a5a5a" stroke-width="1.1" fill="none"/><path d="M660.8 682.9L653.3 679.1L656.1999999999999 682.9L653.3 686.6999999999999Z" fill="#1c1c1c" stroke="#1c1c1c" stroke-width=".4" stroke-linejoin="round"/>
<path d="M838 682.9H861.6" stroke="#5a5a5a" stroke-width="1.1" fill="none"/><path d="M865.6 682.9L858.1 679.1L861.0 682.9L858.1 686.6999999999999Z" fill="#1c1c1c" stroke="#1c1c1c" stroke-width=".4" stroke-linejoin="round"/>
<path d="M735.3 422.3V462.4H556.4V498" stroke="#3a3a3a" stroke-width="1" fill="none"/><path d="M556.4 503L552.9 495.1L556.4 497.7L559.9 495.1Z" fill="#1c1c1c"/>
<path d="M1012.5 569V609.5H612.2V645" stroke="#3a3a3a" stroke-width="1" fill="none"/><path d="M612.2 649.8L608.7 641.9L612.2 644.5L615.7 641.9Z" fill="#1c1c1c"/>
</svg>
<div class="a" style="left:0px;top:131px;width:1440px;height:3px;background:linear-gradient(rgba(228,230,234,.75),rgba(240,241,243,.35) 45%,rgba(255,255,255,0))"></div>
</body></html>
